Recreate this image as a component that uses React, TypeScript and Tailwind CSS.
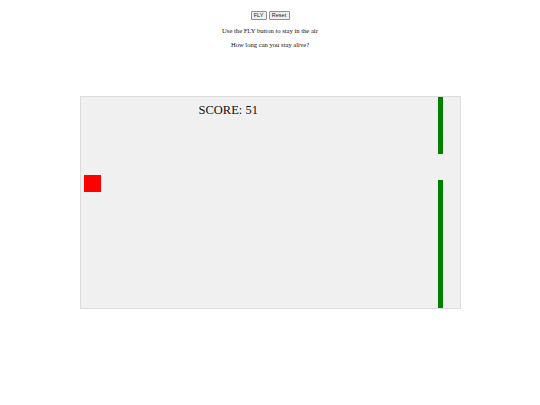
import React from 'react';

function App() {
  return (
    <div className="min-h-[405px] bg-white flex flex-col items-center pt-[11px] font-['Liberation_Serif',serif] text-black">
      <div className="flex gap-[2px] font-['Liberation_Sans',sans-serif]">
        <button className="h-[8.5px] w-[16px] px-0 text-[5.5px] leading-none border border-[#8f8f8f] rounded-[1px] bg-[#efefef] text-[#222] flex items-center justify-center">
          FLY
        </button>
        <button className="h-[8.5px] w-[21px] px-0 text-[5.5px] leading-none border border-[#8f8f8f] rounded-[1px] bg-[#efefef] text-[#222] flex items-center justify-center">
          Reset
        </button>
      </div>
      <p className="mt-[7.5px] text-[6.6px] leading-[8px] text-[#111]">Use the FLY button to stay in the air</p>
      <p className="mt-[6px] text-[6.6px] leading-[8px] text-[#111]">How long can you stay alive?</p>

      <div className="relative mt-[47px] w-[381px] h-[213px] border border-[#dcdcdc] bg-[#f0f0f0]">
        <span className="absolute left-[118px] top-[5px] text-[12.5px] leading-[16px] whitespace-nowrap text-[#111]">
          SCORE: 51
        </span>
        <div className="absolute left-[3.5px] top-[78px] w-[17px] h-[17px] bg-[#ff0000]" />
        <div className="absolute left-[357.5px] top-0 w-[4.5px] h-[57px] bg-[#008000]" />
        <div className="absolute left-[357.5px] top-[83px] bottom-0 w-[4.5px] bg-[#008000]" />
      </div>
    </div>
  );
}

export default App;
